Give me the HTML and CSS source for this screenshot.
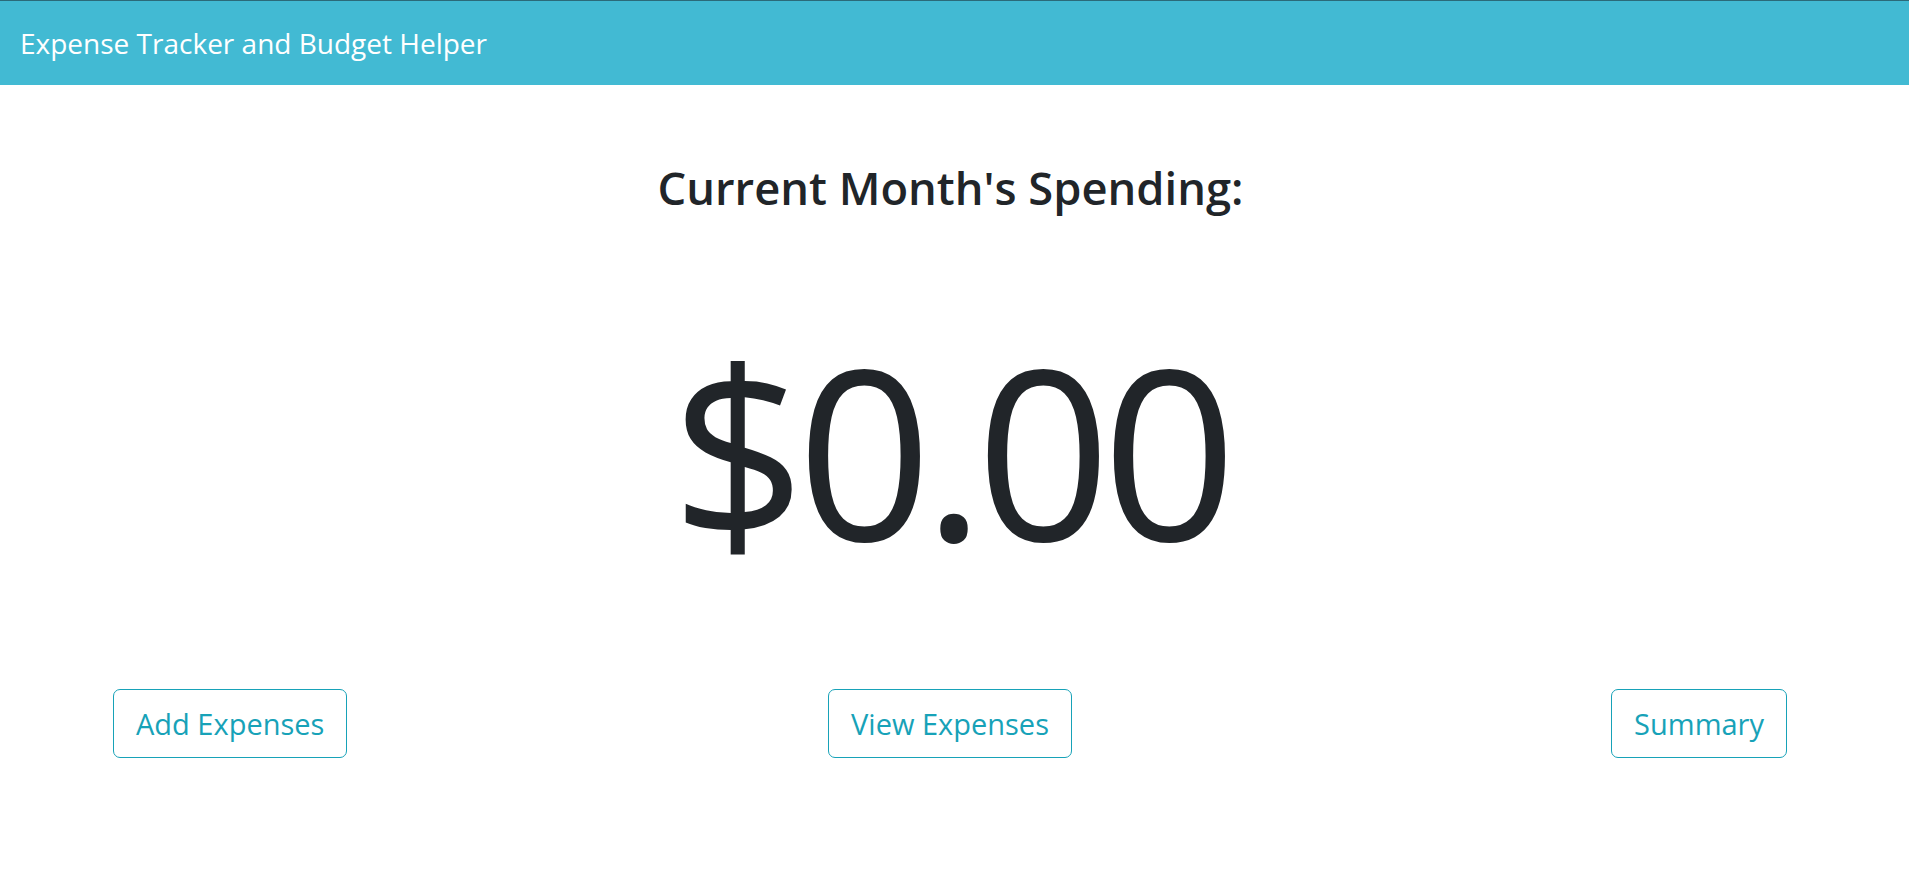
FILE: index.html
```html
<!DOCTYPE html>
<html lang="en">
<head>
<meta charset="utf-8">
<title>Expense Tracker and Budget Helper</title>
<link rel="stylesheet" href="styles.css">
</head>
<body>
<nav class="navbar">
  <span class="brand">Expense Tracker and Budget Helper</span>
</nav>
<main class="main">
  <h2 class="title">Current Month's Spending:</h2>
  <div class="amount">$0.00</div>
  <div class="actions">
    <button class="btn btn-left">Add Expenses</button>
    <button class="btn btn-center">View Expenses</button>
    <button class="btn btn-right">Summary</button>
  </div>
</main>
</body>
</html>
```
FILE: styles.css
```css
* { box-sizing: border-box; }
html, body { margin: 0; padding: 0; background: #fff; }
body {
  font-family: "Open Sans", "Noto Sans", sans-serif;
  color: #212529;
}
.navbar {
  height: 85px;
  border-top: 1px solid #2b6a79;
  background: #42bad3;
  padding: 22px 20px;
  display: flex;
  align-items: flex-start;
}
.brand {
  color: #fff;
  font-size: 28px;
  line-height: 40px;
  font-weight: 400;
}
.main {
  display: flex;
  flex-direction: column;
  align-items: center;
  padding-top: 75px;
}
.title {
  margin: 0;
  padding-right: 8px;
  font-size: 45.3px;
  line-height: 56px;
  font-weight: 600;
}
.amount {
  margin-top: 114px;
  font-size: 236px;
  line-height: 240px;
  letter-spacing: -9px;
  padding-right: 10px;
  font-weight: 400;
}
.actions {
  margin-top: 119px;
  align-self: stretch;
  padding: 0 122px 0 113px;
  display: grid;
  grid-template-columns: 1fr 1fr 1fr;
}
.btn {
  font-family: inherit;
  font-size: 29px;
  line-height: 45px;
  padding: 11px 22px;
  border: 1.5px solid #17a2b8;
  border-radius: 7px;
  color: #17a2b8;
  background: #fff;
}
.btn-left { justify-self: start; }
.btn-center { justify-self: center; }
.btn-right { justify-self: end; }
```
